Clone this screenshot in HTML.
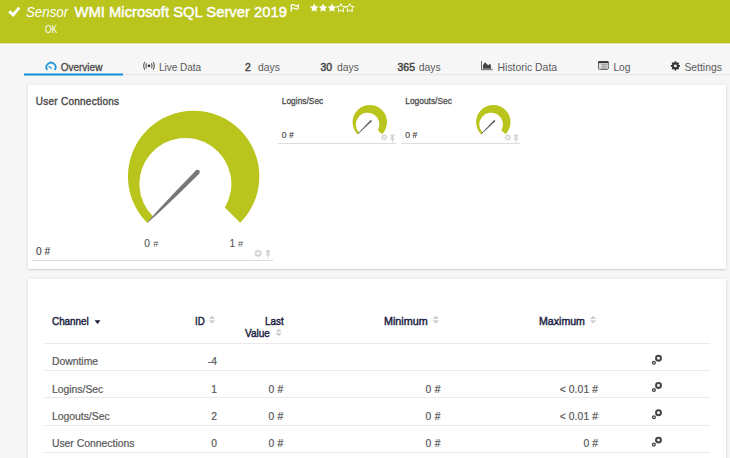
<!DOCTYPE html>
<html><head><meta charset="utf-8"><style>
html,body{margin:0;padding:0;width:730px;height:458px;overflow:hidden;background:#f6f6f6;position:relative;font-family:"Liberation Sans", sans-serif;}
.t{position:absolute;white-space:nowrap;}
.card{position:absolute;background:#fff;box-shadow:0 1px 1.5px rgba(0,0,0,0.12), 0 0 4px rgba(0,0,0,0.07);}
svg{overflow:visible}
</style></head><body>
<div style="position:absolute;left:0;top:0;width:730px;height:43px;background:#b9c41d"></div><div style="position:absolute;left:0;top:42px;width:730px;height:1px;background:#b2bf10"></div><div style="position:absolute;left:0;top:43px;width:730px;height:1px;background:#dfe4ae"></div><div style="position:absolute;left:0;top:44px;width:730px;height:1px;background:#fbfbfd"></div><svg style="position:absolute;left:0;top:0" width="730" height="43"><path d="M9.2 11.2 L13.2 15 L19.3 7.6" fill="none" stroke="#fff" stroke-width="2.9" stroke-linecap="butt" stroke-linejoin="miter"/><path d="M291.3 4.3 V11.6" stroke="#fff" stroke-width="1.3"/><path d="M291.3 5.2 Q293.5 4 295 5.4 Q296.6 6.6 298.3 5.2 V8.4 Q296.6 9.8 295 8.6 Q293.5 7.4 291.3 8.6" fill="none" stroke="#fff" stroke-width="1.2"/><polygon points="314.20,3.60 315.49,6.32 318.48,6.71 316.29,8.78 316.85,11.74 314.20,10.30 311.55,11.74 312.11,8.78 309.92,6.71 312.91,6.32" fill="#fff"/><polygon points="323.10,3.60 324.39,6.32 327.38,6.71 325.19,8.78 325.75,11.74 323.10,10.30 320.45,11.74 321.01,8.78 318.82,6.71 321.81,6.32" fill="#fff"/><polygon points="332.00,3.60 333.29,6.32 336.28,6.71 334.09,8.78 334.65,11.74 332.00,10.30 329.35,11.74 329.91,8.78 327.72,6.71 330.71,6.32" fill="#fff"/><polygon points="340.90,3.60 342.19,6.32 345.18,6.71 342.99,8.78 343.55,11.74 340.90,10.30 338.25,11.74 338.81,8.78 336.62,6.71 339.61,6.32" fill="none" stroke="#fff" stroke-width="1.0"/><polygon points="349.80,3.60 351.09,6.32 354.08,6.71 351.89,8.78 352.45,11.74 349.80,10.30 347.15,11.74 347.71,8.78 345.52,6.71 348.51,6.32" fill="none" stroke="#fff" stroke-width="1.0"/></svg><div class="t" style="left:25.9px;top:5.34px;font-size:14.6px;line-height:14.6px;color:#fff;font-weight:400;font-style:italic;letter-spacing:0px;transform:scaleX(0.91);transform-origin:left center;">Sensor</div>
<div class="t" style="left:74.5px;top:5.37px;font-size:14.8px;line-height:14.8px;color:#fff;font-weight:400;font-style:normal;letter-spacing:0px;-webkit-text-stroke:0.45px #fff;">WMI Microsoft SQL Server 2019</div>
<div class="t" style="left:44.6px;top:24.11px;font-size:10.5px;line-height:10.5px;color:#fff;font-weight:400;font-style:normal;letter-spacing:0px;transform:scaleX(0.81);transform-origin:left center;">OK</div>
<svg style="position:absolute;left:0;top:0" width="730" height="80"><rect x="123" y="73.8" width="607" height="1.4" fill="#e9e9e9"/><rect x="24" y="73.5" width="99" height="2" fill="#0a8fd6"/></svg><div class="t" style="left:60.7px;top:63.44px;font-size:10.0px;line-height:10.0px;color:#4a4a4a;font-weight:400;font-style:normal;letter-spacing:0px;-webkit-text-stroke:0.3px #4a4a4a;">Overview</div>
<div class="t" style="left:158.9px;top:63.44px;font-size:10.0px;line-height:10.0px;color:#5a5a5a;font-weight:400;font-style:normal;letter-spacing:0px;">Live Data</div>
<div class="t" style="left:244.9px;top:63.10px;font-size:10.4px;line-height:10.4px;color:#444;font-weight:400;font-style:normal;letter-spacing:0px;-webkit-text-stroke:0.45px #444;">2</div>
<div class="t" style="left:258.0px;top:63.10px;font-size:10.4px;line-height:10.4px;color:#5a5a5a;font-weight:400;font-style:normal;letter-spacing:0px;">days</div>
<div class="t" style="left:320.5px;top:63.10px;font-size:10.4px;line-height:10.4px;color:#444;font-weight:400;font-style:normal;letter-spacing:0px;-webkit-text-stroke:0.45px #444;">30</div>
<div class="t" style="left:336.9px;top:63.10px;font-size:10.4px;line-height:10.4px;color:#5a5a5a;font-weight:400;font-style:normal;letter-spacing:0px;">days</div>
<div class="t" style="left:397.6px;top:63.10px;font-size:10.4px;line-height:10.4px;color:#444;font-weight:400;font-style:normal;letter-spacing:0px;-webkit-text-stroke:0.45px #444;">365</div>
<div class="t" style="left:418.7px;top:63.10px;font-size:10.4px;line-height:10.4px;color:#5a5a5a;font-weight:400;font-style:normal;letter-spacing:0px;">days</div>
<div class="t" style="left:497.6px;top:63.10px;font-size:10.4px;line-height:10.4px;color:#5a5a5a;font-weight:400;font-style:normal;letter-spacing:0px;">Historic Data</div>
<div class="t" style="left:613.4px;top:63.27px;font-size:10.2px;line-height:10.2px;color:#5a5a5a;font-weight:400;font-style:normal;letter-spacing:0px;">Log</div>
<div class="t" style="left:684.4px;top:63.10px;font-size:10.4px;line-height:10.4px;color:#5a5a5a;font-weight:400;font-style:normal;letter-spacing:0px;">Settings</div>
<svg style="position:absolute;left:0;top:50px" width="730" height="30" viewBox="0 50 730 30"><path d="M47.2 69.9 A4.6 4.6 0 1 1 54.8 69.9" fill="none" stroke="#1a96d8" stroke-width="1.75"/><path d="M48.6 66.2 L51.7 68.5" stroke="#1a94d6" stroke-width="1.3"/><circle cx="149" cy="65.8" r="1.35" fill="#333"/><path d="M146.6 63.4 A4.6 4.6 0 0 0 146.6 68.2" fill="none" stroke="#5a5a5a" stroke-width="1.1"/><path d="M151.4 63.4 A4.6 4.6 0 0 1 151.4 68.2" fill="none" stroke="#5a5a5a" stroke-width="1.1"/><path d="M144.9 62.0 A7 7 0 0 0 144.9 69.6" fill="none" stroke="#5a5a5a" stroke-width="1.1"/><path d="M153.1 62.0 A7 7 0 0 1 153.1 69.6" fill="none" stroke="#5a5a5a" stroke-width="1.1"/><path d="M481.5 61.1 V69.7 H492.8" fill="none" stroke="#6a6a6a" stroke-width="1.0"/><path d="M482.9 68.8 V65.2 L484.9 62.3 L488.2 65.2 L490.4 63.6 L491.3 68.8 Z" fill="#444"/><rect x="598.5" y="61.6" width="9.8" height="7.8" rx="0.8" fill="#ddd" stroke="#555" stroke-width="0.9"/><rect x="598.3" y="61.3" width="10.2" height="1.8" fill="#333"/><path d="M601.5 64.6 H606.5 M601.5 66.4 H606.5 M601.5 68.2 H606.5" stroke="#777" stroke-width="0.7"/><path fill-rule="evenodd" fill="#333" d="M674.42,62.54 L674.61,61.37 L676.19,61.37 L676.38,62.54 L677.09,62.83 L678.05,62.14 L679.16,63.25 L678.47,64.21 L678.76,64.92 L679.93,65.11 L679.93,66.69 L678.76,66.88 L678.47,67.59 L679.16,68.55 L678.05,69.66 L677.09,68.97 L676.38,69.26 L676.19,70.43 L674.61,70.43 L674.42,69.26 L673.71,68.97 L672.75,69.66 L671.64,68.55 L672.33,67.59 L672.04,66.88 L670.87,66.69 L670.87,65.11 L672.04,64.92 L672.33,64.21 L671.64,63.25 L672.75,62.14 L673.71,62.83 Z M676.85,65.90 A1.45,1.45 0 1 0 673.95,65.90 A1.45,1.45 0 1 0 676.85,65.90 Z"/></svg><div class="card" style="left:28px;top:85px;width:698px;height:184px"></div><div class="card" style="left:28px;top:279px;width:698px;height:200px"></div><div class="t" style="left:35.8px;top:97.13px;font-size:10.0px;line-height:10.0px;color:#4e4e4e;font-weight:400;font-style:normal;letter-spacing:0.25px;-webkit-text-stroke:0.4px #4e4e4e;">User Connections</div>
<svg style="position:absolute;left:0;top:0" width="730" height="458"><path d="M147.19,222.86 A65.7,65.7 0 1 1 240.11,222.86 L224.83,207.58 A46,46 0 1 0 153.25,216.80 Z" fill="#b9c41d"/><path d="M147.61,222.81 L158.27,213.35 L178.88,193.71 L199.17,173.76 L195.83,170.44 L176.04,190.89 L156.57,211.65 L147.19,222.39 Z" fill="#777"/><circle cx="197.5" cy="172.1" r="2.35" fill="#777"/><path d="M357.64,134.26 A17.2,17.2 0 1 1 381.96,134.26 L377.92,130.22 A11.8,11.8 0 1 0 359.16,132.74 Z" fill="#b9c41d"/><path d="M357.84,134.14 L371.53,121.43 L370.47,120.37 L357.56,133.86 Z" fill="#555"/><circle cx="371.0" cy="120.9" r="0.75" fill="#555"/><path d="M481.14,134.26 A17.2,17.2 0 1 1 505.46,134.26 L501.42,130.22 A11.8,11.8 0 1 0 482.66,132.74 Z" fill="#b9c41d"/><path d="M481.34,134.14 L495.03,121.43 L493.97,120.37 L481.06,133.86 Z" fill="#555"/><circle cx="494.5" cy="120.9" r="0.75" fill="#555"/><rect x="32" y="260" width="241" height="1" fill="#dcdcdc"/><rect x="278" y="143" width="118.5" height="1" fill="#dcdcdc"/><rect x="401.5" y="143" width="118.5" height="1" fill="#dcdcdc"/><path fill-rule="evenodd" fill="#d4d4d4" d="M257.21,250.42 L257.38,249.46 L258.72,249.46 L258.89,250.42 L259.50,250.67 L260.29,250.11 L261.24,251.06 L260.68,251.85 L260.93,252.46 L261.89,252.63 L261.89,253.97 L260.93,254.14 L260.68,254.75 L261.24,255.54 L260.29,256.49 L259.50,255.93 L258.89,256.18 L258.72,257.14 L257.38,257.14 L257.21,256.18 L256.60,255.93 L255.81,256.49 L254.86,255.54 L255.42,254.75 L255.17,254.14 L254.21,253.97 L254.21,252.63 L255.17,252.46 L255.42,251.85 L254.86,251.06 L255.81,250.11 L256.60,250.67 Z M259.55,253.30 A1.5,1.5 0 1 0 256.55,253.30 A1.5,1.5 0 1 0 259.55,253.30 Z"/><path d="M265.90,249.90 H270.20 V251.39 H269.50 V253.98 L270.80,255.47 H265.30 L266.60,253.98 V251.39 H265.90 Z" fill="#d6d6d6"/><rect x="267.55" y="255.39" width="1" height="2.97" fill="#d6d6d6"/><path fill-rule="evenodd" fill="#d4d4d4" d="M383.52,135.05 L383.65,134.25 L384.75,134.25 L384.88,135.05 L385.38,135.25 L386.04,134.78 L386.82,135.56 L386.35,136.22 L386.55,136.72 L387.35,136.85 L387.35,137.95 L386.55,138.08 L386.35,138.58 L386.82,139.24 L386.04,140.02 L385.38,139.55 L384.88,139.75 L384.75,140.55 L383.65,140.55 L383.52,139.75 L383.02,139.55 L382.36,140.02 L381.58,139.24 L382.05,138.58 L381.85,138.08 L381.05,137.95 L381.05,136.85 L381.85,136.72 L382.05,136.22 L381.58,135.56 L382.36,134.78 L383.02,135.25 Z M385.40,137.40 A1.2,1.2 0 1 0 383.00,137.40 A1.2,1.2 0 1 0 385.40,137.40 Z"/><path d="M390.40,134.60 H394.50 V136.03 H393.80 V138.54 L395.10,139.97 H389.80 L391.10,138.54 V136.03 H390.40 Z" fill="#d6d6d6"/><rect x="391.95" y="139.89" width="1" height="2.86" fill="#d6d6d6"/><path fill-rule="evenodd" fill="#d4d4d4" d="M507.02,135.05 L507.15,134.25 L508.25,134.25 L508.38,135.05 L508.88,135.25 L509.54,134.78 L510.32,135.56 L509.85,136.22 L510.05,136.72 L510.85,136.85 L510.85,137.95 L510.05,138.08 L509.85,138.58 L510.32,139.24 L509.54,140.02 L508.88,139.55 L508.38,139.75 L508.25,140.55 L507.15,140.55 L507.02,139.75 L506.52,139.55 L505.86,140.02 L505.08,139.24 L505.55,138.58 L505.35,138.08 L504.55,137.95 L504.55,136.85 L505.35,136.72 L505.55,136.22 L505.08,135.56 L505.86,134.78 L506.52,135.25 Z M508.90,137.40 A1.2,1.2 0 1 0 506.50,137.40 A1.2,1.2 0 1 0 508.90,137.40 Z"/><path d="M513.90,134.60 H518.00 V136.03 H517.30 V138.54 L518.60,139.97 H513.30 L514.60,138.54 V136.03 H513.90 Z" fill="#d6d6d6"/><rect x="515.45" y="139.89" width="1" height="2.86" fill="#d6d6d6"/><path d="M94.6 320.2 H100.5 L97.55 323.9 Z" fill="#141c38"/><path d="M208.8,318.90000000000003 L211.9,315.6 L215.0,318.90000000000003 Z" fill="#cfcfcf"/><path d="M208.8,320.20000000000005 L211.9,323.8 L215.0,320.20000000000005 Z" fill="#cfcfcf"/><path d="M275.6,331.7 L278.70000000000005,328.4 L281.8,331.7 Z" fill="#cfcfcf"/><path d="M275.6,333.0 L278.70000000000005,336.59999999999997 L281.8,333.0 Z" fill="#cfcfcf"/><path d="M432.7,318.90000000000003 L435.8,315.6 L438.9,318.90000000000003 Z" fill="#cfcfcf"/><path d="M432.7,320.20000000000005 L435.8,323.8 L438.9,320.20000000000005 Z" fill="#cfcfcf"/><path d="M589.9,318.90000000000003 L593.0,315.6 L596.1,318.90000000000003 Z" fill="#cfcfcf"/><path d="M589.9,320.20000000000005 L593.0,323.8 L596.1,320.20000000000005 Z" fill="#cfcfcf"/><rect x="44" y="343" width="666" height="1" fill="#ebebeb"/><rect x="44" y="370" width="666" height="1" fill="#ebebeb"/><rect x="44" y="397" width="666" height="1" fill="#ebebeb"/><rect x="44" y="425" width="666" height="1" fill="#ebebeb"/><rect x="44" y="452" width="666" height="1" fill="#ebebeb"/><circle cx="658.5" cy="358.20" r="2.45" fill="none" stroke="#444" stroke-width="2.0"/><circle cx="653.9" cy="362.70" r="1.4" fill="none" stroke="#444" stroke-width="1.3"/><circle cx="658.5" cy="385.50" r="2.45" fill="none" stroke="#444" stroke-width="2.0"/><circle cx="653.9" cy="390.00" r="1.4" fill="none" stroke="#444" stroke-width="1.3"/><circle cx="658.5" cy="412.80" r="2.45" fill="none" stroke="#444" stroke-width="2.0"/><circle cx="653.9" cy="417.30" r="1.4" fill="none" stroke="#444" stroke-width="1.3"/><circle cx="658.5" cy="440.10" r="2.45" fill="none" stroke="#444" stroke-width="2.0"/><circle cx="653.9" cy="444.60" r="1.4" fill="none" stroke="#444" stroke-width="1.3"/></svg><div class="t" style="left:36.0px;top:246.77px;font-size:10.2px;line-height:10.2px;color:#444;font-weight:400;font-style:normal;letter-spacing:0px;-webkit-text-stroke:0.15px #444;">0 #</div>
<div class="t" style="left:144.3px;top:239.37px;font-size:10.2px;line-height:10.2px;color:#555;font-weight:400;font-style:normal;letter-spacing:0px;-webkit-text-stroke:0.1px #555;">0</div>
<div class="t" style="left:153.2px;top:239.51px;font-size:9.2px;line-height:9.2px;color:#555;font-weight:400;font-style:normal;letter-spacing:0px;">#</div>
<div class="t" style="left:229.6px;top:239.37px;font-size:10.2px;line-height:10.2px;color:#555;font-weight:400;font-style:normal;letter-spacing:0px;-webkit-text-stroke:0.1px #555;">1</div>
<div class="t" style="left:238.0px;top:239.51px;font-size:9.2px;line-height:9.2px;color:#555;font-weight:400;font-style:normal;letter-spacing:0px;">#</div>
<div class="t" style="left:281.8px;top:96.79px;font-size:8.4px;line-height:8.4px;color:#4e4e4e;font-weight:400;font-style:normal;letter-spacing:0px;-webkit-text-stroke:0.28px #4e4e4e;">Logins/Sec</div>
<div class="t" style="left:281.8px;top:131.42px;font-size:8.6px;line-height:8.6px;color:#444;font-weight:400;font-style:normal;letter-spacing:0px;-webkit-text-stroke:0.15px #444;">0 #</div>
<div class="t" style="left:405.3px;top:96.79px;font-size:8.4px;line-height:8.4px;color:#4e4e4e;font-weight:400;font-style:normal;letter-spacing:0px;-webkit-text-stroke:0.28px #4e4e4e;">Logouts/Sec</div>
<div class="t" style="left:405.3px;top:131.42px;font-size:8.6px;line-height:8.6px;color:#444;font-weight:400;font-style:normal;letter-spacing:0px;-webkit-text-stroke:0.15px #444;">0 #</div>
<div class="t" style="left:51.9px;top:316.90px;font-size:10.4px;line-height:10.4px;color:#19223f;font-weight:400;font-style:normal;letter-spacing:0px;-webkit-text-stroke:0.42px #19223f;transform:scaleX(0.95);transform-origin:left center;">Channel</div>
<div class="t" style="left:194.6px;top:316.90px;font-size:10.4px;line-height:10.4px;color:#19223f;font-weight:400;font-style:normal;letter-spacing:0px;-webkit-text-stroke:0.42px #19223f;transform:scaleX(0.93);transform-origin:left center;">ID</div>
<div class="t" style="right:446.6px;text-align:right;top:316.90px;font-size:10.4px;line-height:10.4px;color:#19223f;font-weight:400;font-style:normal;letter-spacing:0px;-webkit-text-stroke:0.42px #19223f;transform:scaleX(0.955);transform-origin:right center;">Last</div>
<div class="t" style="left:245.3px;top:329.20px;font-size:10.4px;line-height:10.4px;color:#19223f;font-weight:400;font-style:normal;letter-spacing:0px;-webkit-text-stroke:0.42px #19223f;transform:scaleX(0.965);transform-origin:left center;">Value</div>
<div class="t" style="left:384.1px;top:316.90px;font-size:10.4px;line-height:10.4px;color:#19223f;font-weight:400;font-style:normal;letter-spacing:0px;-webkit-text-stroke:0.42px #19223f;transform:scaleX(1.035);transform-origin:left center;">Minimum</div>
<div class="t" style="left:538.8px;top:316.90px;font-size:10.4px;line-height:10.4px;color:#19223f;font-weight:400;font-style:normal;letter-spacing:0px;-webkit-text-stroke:0.42px #19223f;transform:scaleX(1.02);transform-origin:left center;">Maximum</div>
<div class="t" style="left:51.9px;top:356.70px;font-size:10.4px;line-height:10.4px;color:#585858;font-weight:400;font-style:normal;letter-spacing:0px;-webkit-text-stroke:0.2px #585858;">Downtime</div>
<div class="t" style="right:513.0px;text-align:right;top:356.78px;font-size:10.3px;line-height:10.3px;color:#585858;font-weight:400;font-style:normal;letter-spacing:0px;-webkit-text-stroke:0.2px #585858;">-4</div>
<div class="t" style="left:51.9px;top:384.60px;font-size:10.4px;line-height:10.4px;color:#585858;font-weight:400;font-style:normal;letter-spacing:0px;-webkit-text-stroke:0.2px #585858;">Logins/Sec</div>
<div class="t" style="right:513.0px;text-align:right;top:384.68px;font-size:10.3px;line-height:10.3px;color:#585858;font-weight:400;font-style:normal;letter-spacing:0px;-webkit-text-stroke:0.2px #585858;">1</div>
<div class="t" style="right:446.4px;text-align:right;top:384.68px;font-size:10.3px;line-height:10.3px;color:#585858;font-weight:400;font-style:normal;letter-spacing:0.3px;-webkit-text-stroke:0.2px #585858;">0 #</div>
<div class="t" style="right:289.3px;text-align:right;top:384.68px;font-size:10.3px;line-height:10.3px;color:#585858;font-weight:400;font-style:normal;letter-spacing:0.3px;-webkit-text-stroke:0.2px #585858;">0 #</div>
<div class="t" style="right:132.0px;text-align:right;top:384.68px;font-size:10.3px;line-height:10.3px;color:#585858;font-weight:400;font-style:normal;letter-spacing:0.1px;-webkit-text-stroke:0.2px #585858;">&lt; 0.01 #</div>
<div class="t" style="left:51.9px;top:411.60px;font-size:10.4px;line-height:10.4px;color:#585858;font-weight:400;font-style:normal;letter-spacing:0px;-webkit-text-stroke:0.2px #585858;">Logouts/Sec</div>
<div class="t" style="right:513.0px;text-align:right;top:411.68px;font-size:10.3px;line-height:10.3px;color:#585858;font-weight:400;font-style:normal;letter-spacing:0px;-webkit-text-stroke:0.2px #585858;">2</div>
<div class="t" style="right:446.4px;text-align:right;top:411.68px;font-size:10.3px;line-height:10.3px;color:#585858;font-weight:400;font-style:normal;letter-spacing:0.3px;-webkit-text-stroke:0.2px #585858;">0 #</div>
<div class="t" style="right:289.3px;text-align:right;top:411.68px;font-size:10.3px;line-height:10.3px;color:#585858;font-weight:400;font-style:normal;letter-spacing:0.3px;-webkit-text-stroke:0.2px #585858;">0 #</div>
<div class="t" style="right:132.0px;text-align:right;top:411.68px;font-size:10.3px;line-height:10.3px;color:#585858;font-weight:400;font-style:normal;letter-spacing:0.1px;-webkit-text-stroke:0.2px #585858;">&lt; 0.01 #</div>
<div class="t" style="left:51.9px;top:438.60px;font-size:10.4px;line-height:10.4px;color:#585858;font-weight:400;font-style:normal;letter-spacing:0px;-webkit-text-stroke:0.2px #585858;">User Connections</div>
<div class="t" style="right:513.0px;text-align:right;top:438.68px;font-size:10.3px;line-height:10.3px;color:#585858;font-weight:400;font-style:normal;letter-spacing:0px;-webkit-text-stroke:0.2px #585858;">0</div>
<div class="t" style="right:446.4px;text-align:right;top:438.68px;font-size:10.3px;line-height:10.3px;color:#585858;font-weight:400;font-style:normal;letter-spacing:0.3px;-webkit-text-stroke:0.2px #585858;">0 #</div>
<div class="t" style="right:289.3px;text-align:right;top:438.68px;font-size:10.3px;line-height:10.3px;color:#585858;font-weight:400;font-style:normal;letter-spacing:0.3px;-webkit-text-stroke:0.2px #585858;">0 #</div>
<div class="t" style="right:132.0px;text-align:right;top:438.68px;font-size:10.3px;line-height:10.3px;color:#585858;font-weight:400;font-style:normal;letter-spacing:0.1px;-webkit-text-stroke:0.2px #585858;">0 #</div>

</body></html>
